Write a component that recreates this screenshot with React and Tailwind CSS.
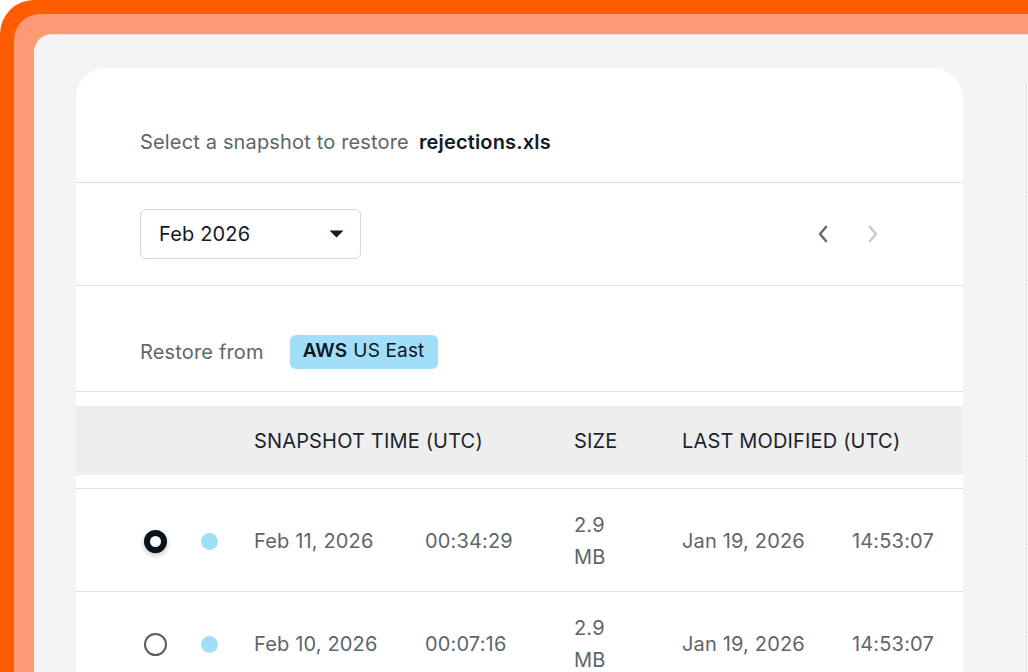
import React from "react";

const rows = [
  { checked: true, date: "Feb 11, 2026", time: "00:34:29", size: "2.9", unit: "MB", modDate: "Jan 19, 2026", modTime: "14:53:07" },
  { checked: false, date: "Feb 10, 2026", time: "00:07:16", size: "2.9", unit: "MB", modDate: "Jan 19, 2026", modTime: "14:53:07" },
];

const Radio = ({ checked }) =>
  checked ? (
    <div className="w-[23px] h-[23px] rounded-full border-[6px] border-[#0b141b] bg-white shadow-[0_2px_5px_rgba(0,0,0,0.25)]" />
  ) : (
    <div className="w-[23px] h-[23px] rounded-full border-2 border-[#545d63] bg-white" />
  );

const App = () => {
  return (
    <div className="w-[1028px] h-[672px] overflow-hidden bg-white font-['Inter',sans-serif] tracking-[0.01em]">
      <div className="h-full rounded-tl-[34px] bg-[#FF5C00] pt-[14px] pl-[14px]">
        <div className="h-full rounded-tl-[26px] bg-[#FB9A75] pt-[20px] pl-[20px]">
          <div className="h-full rounded-tl-[18px] bg-[#F4F4F4] border-t border-[#e6e6e6] pt-[33px] pl-[42px] flex">
            <div className="w-[887px] shrink-0 bg-white rounded-t-[30px]">
              {/* title */}
              <div className="h-[115px] flex items-center pt-[34px] px-[64px] text-[20px] border-b border-[#dbe1e5]">
                <span className="text-[#5c666c]">Select a snapshot to restore</span>
                <span className="ml-[10px] font-semibold text-[#111b22]">rejections.xls</span>
              </div>

              {/* month picker */}
              <div className="h-[103px] flex items-center px-[64px] border-b border-[#dbe1e5]">
                <div className="w-[221px] h-[50px] rounded-[6px] border border-[#d3d9dd] flex items-center justify-between pl-[18px] pr-[16px]">
                  <span className="text-[20px] text-[#111b22]">Feb 2026</span>
                  <svg width="15" height="8" viewBox="0 0 15 8">
                    <path d="M0.5 0.5 L14.5 0.5 L7.5 7.5 Z" fill="#111b22" />
                  </svg>
                </div>
                <div className="ml-auto flex items-center gap-[38px] mr-[20px]">
                  <svg width="12" height="18" viewBox="0 0 12 18">
                    <path d="M9 2 L3 9 L9 16" fill="none" stroke="#6b6979" strokeWidth="2.6" strokeLinecap="round" strokeLinejoin="round" />
                  </svg>
                  <svg width="12" height="18" viewBox="0 0 12 18">
                    <path d="M3 2 L9 9 L3 16" fill="none" stroke="#c9c8ce" strokeWidth="2.6" strokeLinecap="round" strokeLinejoin="round" />
                  </svg>
                </div>
              </div>

              {/* restore from */}
              <div className="h-[106px] flex items-center pt-[26px] px-[64px] border-b border-[#dbe1e5]">
                <span className="text-[20px] text-[#5c666c]">Restore from</span>
                <span className="ml-[26px] h-[34px] px-[13px] rounded-[6px] bg-[#A0DEFA] flex items-center text-[19px] text-[#0e171d]">
                  <span className="font-semibold">AWS</span>
                  <span className="ml-[6px]">US East</span>
                </span>
              </div>

              {/* table */}
              <div className="pt-[14px]">
                <div className="h-[69px] bg-[#EEEEEE] grid grid-cols-[58px_52px_320px_108px_1fr] items-center pl-[68px] text-[20px] text-[#1b252b]">
                  <div />
                  <div />
                  <div>SNAPSHOT TIME (UTC)</div>
                  <div>SIZE</div>
                  <div>LAST MODIFIED (UTC)</div>
                </div>
                <div className="h-[14px] border-b border-[#dbe1e5]" />
                {rows.map((r, i) => (
                  <div
                    key={i}
                    className="h-[103px] grid grid-cols-[58px_52px_171px_149px_108px_170px_1fr] items-center pl-[68px] pt-[2px] text-[20px] text-[#5c666c] border-b border-[#dbe1e5]"
                  >
                    <div className="flex">
                      <Radio checked={r.checked} />
                    </div>
                    <div className="flex">
                      <div className="w-[17px] h-[17px] rounded-full bg-[#A0DEFA] -ml-[1px]" />
                    </div>
                    <div>{r.date}</div>
                    <div>{r.time}</div>
                    <div className="leading-[32px]">
                      <div>{r.size}</div>
                      <div>{r.unit}</div>
                    </div>
                    <div>{r.modDate}</div>
                    <div>{r.modTime}</div>
                  </div>
                ))}
              </div>
            </div>

            {/* edge of the next panel */}
            <div className="ml-[63px] mt-[16px] w-[4px] bg-white border-l border-[#dedede] flex flex-col">
              <div className="h-[109px] border-b border-[#e3e3e3]" />
              <div className="h-[88px] border-b border-[#e3e3e3]" />
              <div className="h-[88px]" />
              <div className="h-[88px] border-b border-[#e3e3e3]" />
              <div className="h-[88px] border-b border-[#e3e3e3]" />
              <div className="h-[88px] border-b border-[#e3e3e3]" />
            </div>
          </div>
        </div>
      </div>
    </div>
  );
};

export default App;
